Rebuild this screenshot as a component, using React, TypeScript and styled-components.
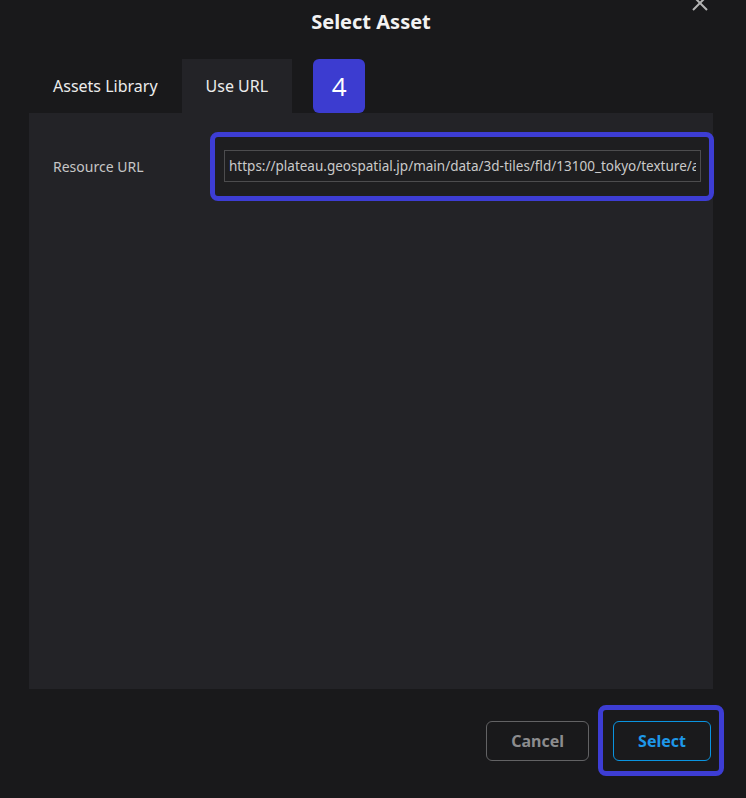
import React from 'react';
import styled, { createGlobalStyle } from 'styled-components';

const GlobalStyle = createGlobalStyle`
  html,
  body {
    margin: 0;
    padding: 0;
    background: #19191b;
  }

  body {
    font-family: 'Noto Sans', 'Open Sans', sans-serif;
    color: #e6e6e6;
  }
`;

const Page = styled.div`
  width: 746px;
  height: 798px;
  overflow: hidden;
  background: #19191b;

  display: flex;
  flex-direction: column;
`;

const Header = styled.div`
  width: 684px;
  height: 43px;
  margin-left: 29px;
  position: relative;

  display: flex;
  justify-content: center;
  align-items: center;

  h1 {
    margin: 0;
    font-size: 20px;
    font-weight: 700;
    color: #f2f2f2;
  }
`;

const CloseButton = styled.button`
  position: absolute;
  right: 4px;
  top: -6px;
  width: 18px;
  height: 18px;
  padding: 0;
  border: none;
  background: none;
  color: #b4b4b4;
  cursor: pointer;
`;

const TabBar = styled.div`
  margin: 16px 0 0 29px;
  height: 54px;

  display: flex;
  align-items: stretch;
`;

const Tab = styled.div<{ $active?: boolean }>`
  padding: 0 24px;

  display: flex;
  align-items: center;

  font-size: 16px;
  color: #ececec;
  background: ${(props) => (props.$active ? '#232327' : 'transparent')};
`;

const StepBadge = styled.div`
  width: 52px;
  height: 54px;
  margin-left: 21px;
  border-radius: 6px;
  background: #3c3cd0;

  display: flex;
  justify-content: center;
  align-items: center;

  font-family: 'Open Sans', 'Noto Sans', sans-serif;
  font-size: 26px;
  color: #ffffff;
`;

const Panel = styled.div`
  width: 684px;
  height: 576px;
  margin-left: 29px;
  padding: 19px 0 0 24px;
  box-sizing: border-box;
  background: #232327;
`;

const FieldRow = styled.div`
  display: flex;
  align-items: center;

  label {
    width: 157px;
    flex-shrink: 0;
    font-size: 14px;
    color: #c6c6c6;
  }
`;

const Highlight = styled.div`
  border: 5px solid #3d3dd4;
  border-radius: 8px;
  background: #1e1e20;
  box-sizing: border-box;
  flex-shrink: 0;
`;

const UrlBox = styled(Highlight)`
  width: 504px;
  padding: 13px 8px 14px 9px;
`;

const UrlInput = styled.input`
  width: 100%;
  height: 32px;
  box-sizing: border-box;
  padding: 0 4px;
  border: 1px solid #4c4c4e;
  background: #1e1e20;
  outline: none;

  font-family: 'Noto Sans', 'Open Sans', sans-serif;
  font-size: 13.5px;
  color: #cacaca;
`;

const Footer = styled.div`
  padding: 16px 22px 0 0;

  display: flex;
  justify-content: flex-end;
  align-items: center;
  gap: 9px;
`;

const SelectBox = styled(Highlight)`
  padding: 11px 8px 10px 10px;
  background: #1a1a1c;
`;

const Button = styled.button<{ $primary?: boolean }>`
  height: 40px;
  padding: 0 24px;
  border-radius: 6px;
  border: 1px solid ${(props) => (props.$primary ? '#0a94e0' : '#626264')};
  background: transparent;

  font-family: 'Noto Sans', 'Open Sans', sans-serif;
  font-size: 16px;
  font-weight: 700;
  color: ${(props) => (props.$primary ? '#1e98e8' : '#8c8c8e')};
  cursor: pointer;
`;

const App = () => {
  const url =
    'https://plateau.geospatial.jp/main/data/3d-tiles/fld/13100_tokyo/texture/arakawa_all_texture/tileset.json';

  return (
    <Page>
      <GlobalStyle />
      <Header>
        <h1>Select Asset</h1>
        <CloseButton aria-label="close">
          <svg width="18" height="18" viewBox="0 0 18 18">
            <path
              d="M2 2 L16 16 M16 2 L2 16"
              stroke="currentColor"
              strokeWidth="2"
              fill="none"
            />
          </svg>
        </CloseButton>
      </Header>
      <TabBar>
        <Tab>Assets Library</Tab>
        <Tab $active>Use URL</Tab>
        <StepBadge>4</StepBadge>
      </TabBar>
      <Panel>
        <FieldRow>
          <label>Resource URL</label>
          <UrlBox>
            <UrlInput readOnly value={url} />
          </UrlBox>
        </FieldRow>
      </Panel>
      <Footer>
        <Button>Cancel</Button>
        <SelectBox>
          <Button $primary>Select</Button>
        </SelectBox>
      </Footer>
    </Page>
  );
};

export default App;
